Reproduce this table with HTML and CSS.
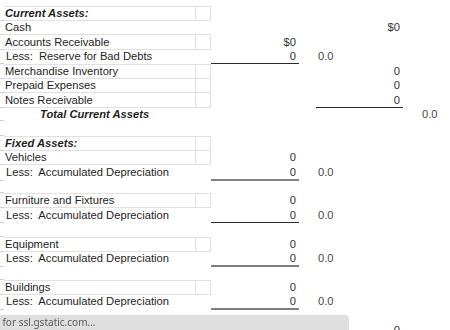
FILE: index.html
```html
<html>

<head>
  <link rel="stylesheet" href="styles.css">
</head>

<body>
  <!-- Balance sheet: asset section -->
  <div id="sheet">
    <!-- Current assets -->
    <div class="row boxed top">
      <div class="gut"></div>
      <div class="lbl head">Current Assets:</div>
      <div class="sp"></div>
    </div>
    <div class="row boxed open">
      <div class="gut"></div>
      <div class="lbl">Cash</div>
      <div class="sp"></div>
      <div class="c">$0</div>
    </div>
    <div class="row boxed">
      <div class="gut"></div>
      <div class="lbl">Accounts Receivable</div>
      <div class="sp"></div>
      <div class="a">$0</div>
    </div>
    <div class="row">
      <div class="gut"></div>
      <div class="lbl less">Less:  Reserve for Bad Debts</div>
      <div class="sp"></div>
      <div class="a rule">0</div>
      <div class="c sub">0.0</div>
    </div>
    <div class="row boxed top">
      <div class="gut"></div>
      <div class="lbl">Merchandise Inventory</div>
      <div class="sp"></div>
      <div class="c">0</div>
    </div>
    <div class="row boxed">
      <div class="gut"></div>
      <div class="lbl">Prepaid Expenses</div>
      <div class="sp"></div>
      <div class="c">0</div>
    </div>
    <div class="row boxed">
      <div class="gut"></div>
      <div class="lbl">Notes Receivable</div>
      <div class="sp"></div>
      <div class="c rule">0</div>
    </div>
    <div class="row">
      <div class="gut"></div>
      <div class="lbl head total">Total Current Assets</div>
      <div class="sp"></div>
      <div class="e">0.0</div>
    </div>
    <div class="row">
      <div class="gut"></div>
    </div>

    <!-- Fixed assets -->
    <div class="row boxed top">
      <div class="gut"></div>
      <div class="lbl head">Fixed Assets:</div>
      <div class="sp"></div>
    </div>
    <div class="row boxed">
      <div class="gut"></div>
      <div class="lbl">Vehicles</div>
      <div class="sp"></div>
      <div class="a">0</div>
    </div>
    <div class="row">
      <div class="gut"></div>
      <div class="lbl less">Less:  Accumulated Depreciation</div>
      <div class="sp"></div>
      <div class="a rule soft">0</div>
      <div class="c sub">0.0</div>
    </div>
    <div class="row">
      <div class="gut"></div>
    </div>

    <div class="row boxed top">
      <div class="gut"></div>
      <div class="lbl">Furniture and Fixtures</div>
      <div class="sp"></div>
      <div class="a">0</div>
    </div>
    <div class="row">
      <div class="gut"></div>
      <div class="lbl less">Less:  Accumulated Depreciation</div>
      <div class="sp"></div>
      <div class="a rule">0</div>
      <div class="c sub">0.0</div>
    </div>
    <div class="row">
      <div class="gut"></div>
    </div>

    <div class="row boxed top">
      <div class="gut"></div>
      <div class="lbl">Equipment</div>
      <div class="sp"></div>
      <div class="a">0</div>
    </div>
    <div class="row">
      <div class="gut"></div>
      <div class="lbl less">Less:  Accumulated Depreciation</div>
      <div class="sp"></div>
      <div class="a rule soft">0</div>
      <div class="c sub">0.0</div>
    </div>
    <div class="row">
      <div class="gut"></div>
    </div>

    <div class="row boxed top">
      <div class="gut"></div>
      <div class="lbl">Buildings</div>
      <div class="sp"></div>
      <div class="a">0</div>
    </div>
    <div class="row">
      <div class="gut"></div>
      <div class="lbl less">Less:  Accumulated Depreciation</div>
      <div class="sp"></div>
      <div class="a rule soft">0</div>
      <div class="c sub">0.0</div>
    </div>
    <div class="row">
      <div class="gut"></div>
    </div>
    <div class="row">
      <div class="gut"></div>
      <div class="lbl"></div>
      <div class="sp"></div>
      <div class="c">0</div>
    </div>
  </div>

  <!-- Browser loading status, sits over the sheet -->
  <div id="status"><span class="msg">Waiting for ssl.gstatic.com...</span></div>
</body>

</html>
```

FILE: styles.css
```css
body {
  margin: 0;
  font-family: "Liberation Sans", Arial, sans-serif;
  font-size: 11.2px;
  color: #1e1e1e;
  background-color: white;
  overflow: hidden;
}

#sheet {
  padding-top: 6px;
}

/* every row shares the same column widths */
.row {
  display: grid;
  grid-template-columns: 4px 191px 16px 88px 17px 87px 17px 30px;
  height: 14.43px;
  line-height: 14px;
}

.row > div {
  box-sizing: border-box;
  white-space: pre;
}

.gut {
  grid-column: 1;
  border-bottom: 1px solid #d0d0d0;
}

.lbl {
  grid-column: 2;
  padding-left: 1px;
}

.less {
  padding-left: 2px;
}

.head {
  font-weight: bold;
  font-style: italic;
}

.total {
  padding-left: 36px;
}

.sp {
  grid-column: 3;
}

/* number columns */
.a,
.c,
.e {
  color: #333;
}

.a {
  grid-column: 4;
  text-align: right;
  padding-right: 3px;
}

.c {
  grid-column: 6;
  text-align: right;
  padding-right: 3px;
}

.c.sub {
  text-align: left;
  padding-left: 2px;
  color: #484848;
}

.e {
  grid-column: 8;
  padding-left: 2px;
  color: #484848;
}

/* light cell grid on the label cells */
.boxed .lbl,
.boxed .sp {
  border-bottom: 1px solid #e1e1e1;
}

.boxed .sp {
  border-left: 1px solid #e1e1e1;
  border-right: 1px solid #e1e1e1;
}

.boxed.open .sp {
  border-left: 0;
  border-right: 0;
}

.top .lbl,
.top .sp {
  box-shadow: inset 0 1px 0 #e1e1e1;
}

/* subtotal underlines */
.rule {
  border-bottom: 1px solid #2a2a2a;
}

.rule.soft {
  border-bottom: 2px solid #808080;
}

#status {
  position: fixed;
  left: 0;
  bottom: 0;
  width: 349px;
  height: 15px;
  background-color: #dfdfdf;
  border-top-right-radius: 4px;
  font-family: "Noto Sans", sans-serif;
  font-size: 10px;
  line-height: 15px;
  color: #5a5a5a;
  white-space: nowrap;
  overflow: hidden;
}

.msg {
  display: inline-block;
  margin-left: -36px;
}
```
